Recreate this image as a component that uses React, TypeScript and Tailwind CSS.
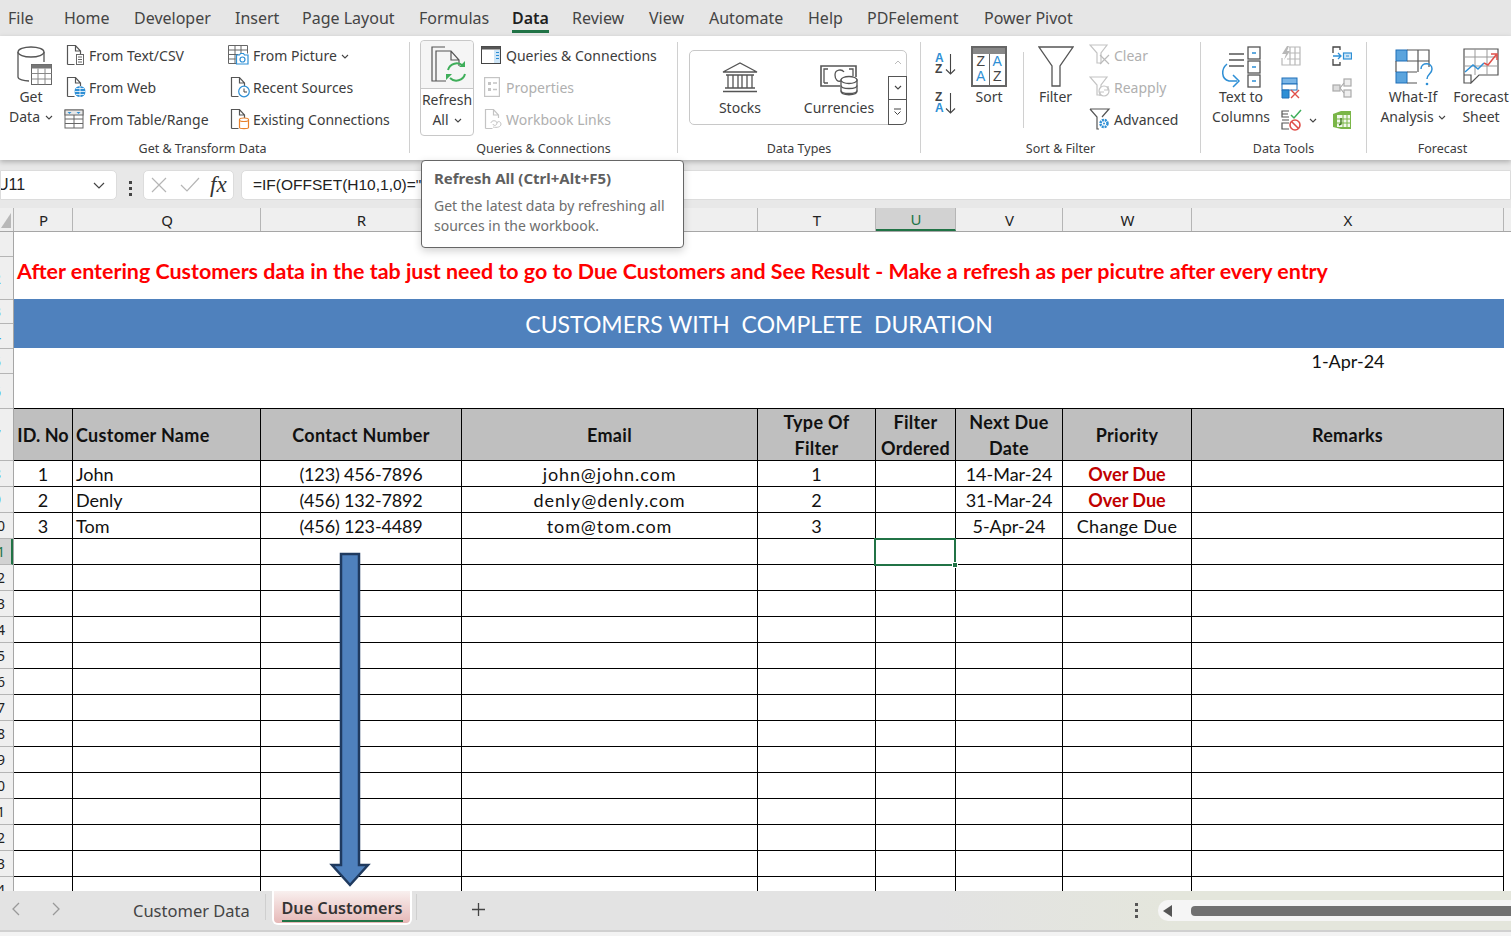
import type { ReactNode } from "react";

const menuItems = [
  { label: "File", cls: "w-[64px] pl-[8px]" },
  { label: "Home", cls: "w-[70px]" },
  { label: "Developer", cls: "w-[101px]" },
  { label: "Insert", cls: "w-[67px]" },
  { label: "Page Layout", cls: "w-[117px]" },
  { label: "Formulas", cls: "w-[93px]" },
  { label: "Data", cls: "w-[60px] font-semibold text-[#1f1f1f]", active: true },
  { label: "Review", cls: "w-[77px]" },
  { label: "View", cls: "w-[60px]" },
  { label: "Automate", cls: "w-[99px]" },
  { label: "Help", cls: "w-[59px]" },
  { label: "PDFelement", cls: "w-[117px]" },
  { label: "Power Pivot", cls: "w-[100px]" },
];

const cols = [
  "w-[59px]",
  "w-[188px]",
  "w-[201px]",
  "w-[296px]",
  "w-[118px]",
  "w-[80px]",
  "w-[107px]",
  "w-[129px]",
  "w-[312px]",
];

const letters = ["P", "Q", "R", "", "T", "U", "V", "W", "X"];

const rowHeads = [
  { n: "1", cls: "h-[25px]" },
  { n: "2", cls: "h-[43px]" },
  { n: "3", cls: "h-[24px]" },
  { n: "4", cls: "h-[25px]" },
  { n: "5", cls: "h-[25px]" },
  { n: "6", cls: "h-[35px]" },
  { n: "7", cls: "h-[52px]" },
  { n: "8", cls: "h-[26px]" },
  { n: "9", cls: "h-[26px]" },
];

const data = [
  ["1", "John", "(123) 456-7896", "john@john.com", "1", "", "14-Mar-24", "Over Due", ""],
  ["2", "Denly", "(456) 132-7892", "denly@denly.com", "2", "", "31-Mar-24", "Over Due", ""],
  ["3", "Tom", "(456) 123-4489", "tom@tom.com", "3", "", "5-Apr-24", "Change Due", ""],
];

const emptyRows = Array.from({ length: 14 }, (_, i) => i + 11);

const Chev = () => (
  <svg width="8" height="5" viewBox="0 0 8 5" className="inline-block" fill="none" stroke="#444" strokeWidth="1.1">
    <path d="M1 1l3 3 3-3" />
  </svg>
);

const Doc = ({ stroke = "#555", children }: { stroke?: string; children?: ReactNode }) => (
  <svg width="20" height="22" viewBox="0 0 20 22" fill="none">
    <path d="M1.5 20.5V1.5h8l5 5.5v3M9.5 1.5V7h5M1.5 20.5h7" stroke={stroke} strokeWidth="1.2" />
    {children}
  </svg>
);

const GetDataIcon = () => (
  <svg width="36" height="40" viewBox="0 0 36 40" fill="none">
    <path d="M1 6v25c0 2.5 6 4 11 4" stroke="#555" strokeWidth="1.3" />
    <path d="M27 6v10" stroke="#555" strokeWidth="1.3" />
    <ellipse cx="14" cy="6" rx="13" ry="5" fill="#fff" stroke="#555" strokeWidth="1.3" />
    <rect x="14.5" y="18.5" width="20" height="20" fill="#fff" stroke="#666" />
    <rect x="14.5" y="18.5" width="20" height="4" fill="#777" />
    <path d="M14.5 27.5h20M14.5 33h20M21 22.5v16M28 22.5v16" stroke="#888" />
  </svg>
);

const TextCsvIcon = () => (
  <Doc>
    <rect x="10.5" y="10.5" width="7" height="10" fill="#fff" stroke="#666" />
    <path d="M12 13h4M12 15.5h4M12 18h4" stroke="#666" />
  </Doc>
);

const WebIcon = () => (
  <Doc>
    <circle cx="14" cy="15.5" r="5.5" fill="#2e8fd5" />
    <path d="M8.5 15.5h11M14 10v11M10 12.5h8M10 18.5h8" stroke="#fff" strokeWidth=".8" />
  </Doc>
);

const TableRangeIcon = () => (
  <svg width="20" height="20" viewBox="0 0 20 20" fill="none">
    <rect x="1" y="1" width="18" height="18" fill="#fff" stroke="#666" />
    <rect x="1" y="1" width="18" height="5" fill="#e8e8e8" stroke="#666" />
    <path d="M3.5 3l2 2 2-2zM12.5 3l2 2 2-2z" fill="#2e8fd5" />
    <path d="M1 10h18M1 14.500h18M10 6v13" stroke="#666" />
  </svg>
);

const PictureIcon = () => (
  <svg width="21" height="20" viewBox="0 0 21 20" fill="none">
    <path d="M8 18.500H.5V.5h19v8M.5 5h19M.5 9.500h10M.5 14h7M7 .5v18M13 .5v8" stroke="#666" />
    <path d="M8.500 10h3l1-1.500h3l1 1.500h3.500v9h-11.500z" fill="#fff" stroke="#2e8fd5" strokeWidth="1.2" />
    <circle cx="14.500" cy="14.500" r="2.500" stroke="#2e8fd5" strokeWidth="1.2" />
  </svg>
);

const RecentIcon = () => (
  <Doc>
    <circle cx="14" cy="15.500" r="5.300" fill="#fff" stroke="#2e8fd5" strokeWidth="1.2" />
    <path d="M14 12.500v3.500h3" stroke="#444" />
  </Doc>
);

const ExistingIcon = () => (
  <Doc>
    <path d="M9.500 11.500c0-2 9-2 9 0v8c0 1.500-9 1.500-9 0z" fill="#fff" stroke="#e8812c" strokeWidth="1.2" />
    <path d="M9.500 12c0 2 9 2 9 0" stroke="#e8812c" strokeWidth="1.2" />
  </Doc>
);

const RefreshIcon = () => (
  <svg width="36" height="38" viewBox="0 0 36 38" fill="none">
    <path d="M5 35H1V1h13M5 35V5h15l8 9v6M20 5v9h8M5 35h10" stroke="#555" strokeWidth="1.2" />
    <path d="M17 24a9 9 0 0 1 15-4M34 28a9 9 0 0 1-15 4" stroke="#3fae5a" strokeWidth="2" />
    <path d="M34 15v6h-6zM15 34v-6h6z" fill="#3fae5a" />
  </svg>
);

const QueriesIcon = () => (
  <svg width="20" height="18" viewBox="0 0 20 18" fill="none">
    <rect x=".5" y=".5" width="19" height="17" fill="#fff" stroke="#444" />
    <rect x=".5" y=".5" width="19" height="3" fill="#555" />
    <rect x="13" y="4" width="6" height="13" fill="#cfe6f7" />
    <path d="M15 6.500h3M15 9.500h3M15 12.500h3" stroke="#2e8fd5" strokeWidth="1.2" />
  </svg>
);

const PropertiesIcon = () => (
  <svg width="16" height="20" viewBox="0 0 16 20" fill="none">
    <rect x=".5" y=".5" width="15" height="19" stroke="#c4c4c4" strokeWidth="1.400" />
    <path d="M4 5h3v3H4zM4 11h3v3H4z" fill="#c4c4c4" />
    <path d="M9 6h4M9 12.500h4" stroke="#c4c4c4" strokeWidth="1.500" />
  </svg>
);

const LinksIcon = () => (
  <Doc stroke="#c4c4c4">
    <path d="M7 15c0-3 6-3 6 0s-4 3-4 1M9 19c4 1 8 0 8-3s-4-3-4-1" stroke="#c4c4c4" />
  </Doc>
);

const StocksIcon = () => (
  <svg width="36" height="31" viewBox="0 0 36 31" fill="none" stroke="#555" strokeWidth="1.300">
    <path d="M1 10L18 1l17 9zM4 13h28M6 13v13M11 13v13M16 13v13M20 13v13M25 13v13M30 13v13M3 26h30M1 29.500h34" />
  </svg>
);

const CurrenciesIcon = () => (
  <svg width="38" height="32" viewBox="0 0 38 32" fill="none" stroke="#555" strokeWidth="1.300">
    <path d="M20 21H1V1h35v11" strokeWidth="1.600" />
    <path d="M4 18V4h4M33 11V4h-4M4 18h4" />
    <path d="M24 7c-2-3-9-3-9 3 0 5 3 7 6 6" />
    <path d="M21 15v11c0 5 16 5 16 0V15z" fill="#fff" />
    <ellipse cx="29" cy="15" rx="8" ry="3.500" fill="#fff" />
    <path d="M21 20.500c0 4 16 4 16 0M21 25.500c0 4 16 4 16 0" />
  </svg>
);

const SortAZ = ({ flip }: { flip?: boolean }) => (
  <div className="flex items-center gap-[1px] h-[24px]">
    <div className="flex flex-col text-[12px] leading-[11px] font-semibold font-['Liberation_Sans',sans-serif]">
      <span className={flip ? "text-[#444]" : "text-[#2e8fd5]"}>{flip ? "Z" : "A"}</span>
      <span className={flip ? "text-[#2e8fd5]" : "text-[#444]"}>{flip ? "A" : "Z"}</span>
    </div>
    <svg width="11" height="22" viewBox="0 0 11 22" fill="none" stroke="#444" strokeWidth="1.100">
      <path d="M5.500 1v20M1 16.500l4.500 4.500 4.500-4.500" />
    </svg>
  </div>
);

const SortIcon = () => (
  <div className="w-[36px] h-[41px] border-2 border-[#666] flex flex-col">
    <div className="h-[6px] bg-[#888]" />
    <div className="flex flex-1 text-[14px] leading-[15px] font-['Liberation_Sans',sans-serif] text-center">
      <div className="flex-1 border-r border-[#666]">
        <div className="text-[#444]">Z</div>
        <div className="text-[#2e8fd5]">A</div>
      </div>
      <div className="flex-1">
        <div className="text-[#2e8fd5]">A</div>
        <div className="text-[#444]">Z</div>
      </div>
    </div>
  </div>
);

const FilterIcon = () => (
  <svg width="36" height="41" viewBox="0 0 36 41" fill="none" stroke="#555" strokeWidth="1.300">
    <path d="M1 1h34L22 20v20h-8V20z" />
  </svg>
);

const ClearIcon = () => (
  <svg width="22" height="22" viewBox="0 0 22 22" fill="none" stroke="#c4c4c4" strokeWidth="1.200">
    <path d="M1 1h17l-6 8v10H8V9z" />
    <path d="M11 11l9 9M20 11l-9 9" stroke="#bbb" />
  </svg>
);

const ReapplyIcon = () => (
  <svg width="22" height="22" viewBox="0 0 22 22" fill="none" stroke="#c4c4c4" strokeWidth="1.200">
    <path d="M1 1h17l-6 8v10H8V9z" />
    <circle cx="15" cy="15" r="5" fill="#fff" />
    <path d="M19 10v4h-4M11 20v-4h4" />
  </svg>
);

const AdvancedIcon = () => (
  <svg width="22" height="22" viewBox="0 0 22 22" fill="none" stroke="#555" strokeWidth="1.200">
    <path d="M1 1h19l-7 8M1 1l7 8v12h2" />
    <circle cx="15" cy="15.500" r="3.500" stroke="#2e8fd5" strokeWidth="2.500" strokeDasharray="2 .8" />
    <circle cx="15" cy="15.500" r="1" fill="#2e8fd5" stroke="none" />
  </svg>
);

const TextColumnsIcon = () => (
  <svg width="40" height="44" viewBox="0 0 40 44" fill="none">
    <path d="M8 8h15M8 14h15M8 20h15" stroke="#555" strokeWidth="1.300" />
    <rect x="27" y="1" width="12" height="12" stroke="#555" strokeWidth="1.300" />
    <rect x="27" y="15" width="12" height="12" stroke="#555" strokeWidth="1.300" />
    <rect x="27" y="29" width="12" height="12" stroke="#555" strokeWidth="1.300" />
    <path d="M31 7h4M31 21h4M31 35h4" stroke="#2e8fd5" strokeWidth="1.500" />
    <path d="M6 18C0 23 0 33 8 35h8M12 29l6 6-6 6" stroke="#2e8fd5" strokeWidth="1.500" />
  </svg>
);

const FlashFillIcon = () => (
  <svg width="20" height="20" viewBox="0 0 20 20" fill="none" stroke="#b8b8b8" strokeWidth="1.200">
    <path d="M8 1h11v18H1v-7M8 7h11M6 13h13M9 1v18M14 1v18" />
    <path d="M6 0L1 8h4l-2 6 6-9H6l2-5z" fill="#b8b8b8" stroke="none" />
  </svg>
);

const DupesIcon = () => (
  <svg width="20" height="22" viewBox="0 0 20 22" fill="none">
    <rect x="1" y="1" width="15" height="6" fill="#7ab6e8" stroke="#1e6fb8" />
    <rect x="1" y="7" width="15" height="6" fill="#fff" stroke="#1e6fb8" />
    <path d="M1 13h7v8H1z" fill="#2e8fd5" stroke="#1e6fb8" />
    <path d="M10 13l8 8M18 13l-8 8" stroke="#e0504a" strokeWidth="1.400" />
  </svg>
);

const ValidationIcon = () => (
  <svg width="21" height="22" viewBox="0 0 21 22" fill="none" stroke="#555" strokeWidth="1.200">
    <path d="M8 2H1v6h7M1 5h6M8 14H1v6h7M1 11h7" />
    <path d="M10 6l3 3 7-8" stroke="#3fae5a" strokeWidth="1.500" />
    <circle cx="14" cy="16" r="5" stroke="#e0504a" strokeWidth="1.600" />
    <path d="M10.500 12.500l7 7" stroke="#e0504a" strokeWidth="1.600" />
  </svg>
);

const ConsolidateIcon = () => (
  <svg width="20" height="20" viewBox="0 0 20 20" fill="none">
    <path d="M8 4V1H1v6M1 13v6h7v-3" stroke="#444" strokeWidth="1.300" />
    <path d="M1 10h8M6 7l3 3-3 3" stroke="#2e8fd5" strokeWidth="1.300" />
    <rect x="11.500" y="7" width="8" height="6" fill="#cfe6f7" stroke="#2e8fd5" strokeWidth="1.200" />
    <path d="M14 10h3" stroke="#2e8fd5" />
  </svg>
);

const RelationsIcon = () => (
  <svg width="20" height="20" viewBox="0 0 20 20" fill="none" stroke="#aaa" strokeWidth="1.200">
    <rect x="1" y="7" width="7" height="6" fill="#ddd" />
    <rect x="12" y="1" width="7" height="7" fill="#eee" />
    <rect x="12" y="12" width="7" height="7" fill="#eee" />
    <path d="M8 10l4-5M8 10l4 5" />
  </svg>
);

const DataModelIcon = () => (
  <svg width="20" height="20" viewBox="0 0 20 20" fill="none">
    <path d="M1 4l8-3h10v18H9l-8-2z" fill="#7ab648" />
    <rect x="5" y="5" width="13" height="12" fill="#fff" opacity=".9" />
    <path d="M5 9h13M5 13h13M11 5v12M15 5v12" stroke="#7ab648" />
    <path d="M9 8v6l-2 1" stroke="#3f7a1d" strokeWidth="1.400" />
  </svg>
);

const WhatIfIcon = () => (
  <svg width="40" height="38" viewBox="0 0 40 38" fill="none">
    <rect x="1" y="1" width="11" height="11" fill="#5ba4dd" stroke="#1e6fb8" />
    <rect x="1" y="23" width="11" height="11" fill="#5ba4dd" stroke="#1e6fb8" />
    <path d="M12 1h22v17M12 12h22M1 12v11M12 23h10M23 1v22M12 34h10" stroke="#555" strokeWidth="1.200" />
    <path d="M26 20c0-7 11-7 11 0 0 5-5 5-5 10" stroke="#2e8fd5" strokeWidth="1.500" />
    <circle cx="32" cy="35" r="1.300" fill="#2e8fd5" />
  </svg>
);

const ForecastIcon = () => (
  <svg width="36" height="36" viewBox="0 0 36 36" fill="none">
    <path d="M8 35H1V1h34v26H16l-8 8v-8H1" stroke="#555" strokeWidth="1.200" />
    <path d="M1 9h34M1 18h34M12 1v26M24 1v26" stroke="#999" />
    <path d="M2 24l8-7 5 4 6-6" stroke="#2e8fd5" strokeWidth="1.500" />
    <path d="M21 15l4 2 8-10M28 6h6v6" stroke="#e0504a" strokeWidth="1.500" />
  </svg>
);

const ListItem = ({
  icon,
  label,
  disabled,
  iconCls = "w-[25px]",
}: {
  icon: ReactNode;
  label: string;
  disabled?: boolean;
  iconCls?: string;
}) => (
  <div className={`flex items-center h-[32px] pb-[2px] whitespace-nowrap ${disabled ? "text-[#b0b0b0]" : "text-[#3c3c3c]"}`}>
    <div className={`${iconCls} shrink-0 flex items-center`}>{icon}</div>
    {label}
  </div>
);

const Group = ({
  cls,
  label,
  labelCls = "",
  children,
}: {
  cls: string;
  label: string;
  labelCls?: string;
  children: ReactNode;
}) => (
  <div className={`${cls} shrink-0 flex flex-col`}>
    <div className="h-[100px] flex">{children}</div>
    <div className={`h-[16px] pt-[3px] flex items-center justify-center text-[12.500px] text-[#3c3c3c] whitespace-nowrap ${labelCls}`}>
      {label}
    </div>
  </div>
);

const Divider = ({ cls = "h-[111px] mt-[2px]" }: { cls?: string }) => (
  <div className={`${cls} w-[1px] bg-[#d0d0d0] shrink-0`} />
);

export default function App() {
  return (
    <div className="relative w-[1511px] h-[936px] overflow-hidden bg-white font-['Noto_Sans',sans-serif] text-[14px]">
      {/* menu tabs */}
      <div className="h-[36px] bg-[#e6e6e6] flex items-center text-[16px] text-[#444]">
        {menuItems.map((m) => (
          <div key={m.label} className={`${m.cls} relative h-[36px] flex items-center shrink-0 whitespace-nowrap`}>
            {m.label}
            {m.active && <div className="absolute left-0 bottom-[3px] w-[37px] h-[3px] bg-[#217346]" />}
          </div>
        ))}
      </div>

      {/* ribbon */}
      <div className="relative z-10 h-[124px] bg-white pt-[4px] flex shadow-[0_2px_5px_rgba(0,0,0,0.25)]">
        <Group cls="w-[409px]" label="Get & Transform Data" labelCls="pr-[4px]">
          <div className="w-[62px] mr-[2px] flex flex-col items-center leading-[20px] text-[#3c3c3c]">
            <div className="h-[47px] pt-[6px] pl-[8px]">
              <GetDataIcon />
            </div>
            <div>Get</div>
            <div className="flex items-center gap-[5px]">
              Data <Chev />
            </div>
          </div>
          <div className="w-[164px]">
            <ListItem icon={<TextCsvIcon />} label="From Text/CSV" iconCls="w-[25px] pl-[2px]" />
            <ListItem icon={<WebIcon />} label="From Web" iconCls="w-[25px] pl-[2px]" />
            <ListItem icon={<TableRangeIcon />} label="From Table/Range" />
          </div>
          <div>
            <div className="flex items-center h-[32px] pb-[2px] whitespace-nowrap text-[#3c3c3c]">
              <div className="w-[25px]">
                <PictureIcon />
              </div>
              From Picture <span className="ml-[4px]"><Chev /></span>
            </div>
            <ListItem icon={<RecentIcon />} label="Recent Sources" iconCls="w-[25px] pl-[2px]" />
            <ListItem icon={<ExistingIcon />} label="Existing Connections" iconCls="w-[25px] pl-[2px]" />
          </div>
        </Group>
        <Divider />
        <Group cls="w-[267px]" label="Queries & Connections">
          <div className="ml-[10px] w-[54px] h-[96px] border border-[#c8c8c8] rounded-[4px] flex flex-col items-center text-[#3c3c3c] leading-[20px]">
            <div className="w-full h-[48px] pl-[3px] bg-[#f5f5f5] border-b border-[#c8c8c8] flex items-center justify-center rounded-t-[4px]">
              <RefreshIcon />
            </div>
            <div className="mt-[1px]">Refresh</div>
            <div className="flex items-center gap-[5px]">
              All <Chev />
            </div>
          </div>
          <div className="ml-[7px]">
            <ListItem icon={<QueriesIcon />} label="Queries & Connections" />
            <ListItem icon={<PropertiesIcon />} label="Properties" iconCls="w-[25px] pl-[3px]" disabled />
            <ListItem icon={<LinksIcon />} label="Workbook Links" iconCls="w-[25px] pl-[3px]" disabled />
          </div>
        </Group>
        <Divider />
        <Group cls="w-[242px]" label="Data Types">
          <div className="ml-[11px] mt-[10px] w-[218px] h-[75px] border border-[#c8c8c8] rounded-[5px] flex text-[#3c3c3c]">
            <div className="w-[198px] flex">
              <div className="w-[100px] flex flex-col items-center pt-[11px]">
                <StocksIcon />
                <div className="mt-[4px]">Stocks</div>
              </div>
              <div className="w-[98px] flex flex-col items-center pt-[14px]">
                <CurrenciesIcon />
                <div>Currencies</div>
              </div>
            </div>
            <div className="flex-1 flex flex-col -mr-[1px] -my-[1px]">
              <div className="h-[26px] flex items-center justify-center">
                <svg width="8" height="5" viewBox="0 0 8 5" fill="none" stroke="#bbb"><path d="M1 4l3-3 3 3" /></svg>
              </div>
              <div className="h-[25px] border border-[#555] flex items-center justify-center">
                <Chev />
              </div>
              <div className="h-[25px] border border-t-0 border-[#555] rounded-br-[5px] flex items-center justify-center">
                <svg width="9" height="8" viewBox="0 0 9 8" fill="none" stroke="#444"><path d="M1 1h7M1.500 3.500l3 3 3-3" /></svg>
              </div>
            </div>
          </div>
        </Group>
        <Divider />
        <Group cls="w-[279px]" label="Sort & Filter">
          <div className="w-[50px] pl-[14px] pt-[12px] flex flex-col gap-[15px]">
            <SortAZ />
            <SortAZ flip />
          </div>
          <div className="w-[36px] mr-[16px] flex flex-col items-center leading-[20px] text-[#3c3c3c]">
            <div className="h-[47px] pt-[6px]">
              <SortIcon />
            </div>
            <div>Sort</div>
          </div>
          <Divider cls="h-[76px] mt-[12px]" />
          <div className="w-[65px] pr-[2px] flex flex-col items-center leading-[20px] text-[#3c3c3c]">
            <div className="h-[47px] pt-[6px]">
              <FilterIcon />
            </div>
            <div>Filter</div>
          </div>
          <div>
            <ListItem icon={<ClearIcon />} label="Clear" disabled />
            <ListItem icon={<ReapplyIcon />} label="Reapply" disabled />
            <ListItem icon={<AdvancedIcon />} label="Advanced" />
          </div>
        </Group>
        <Divider />
        <Group cls="w-[165px]" label="Data Tools">
          <div className="w-[80px] flex flex-col items-center leading-[20px] text-[#3c3c3c]">
            <div className="h-[47px] pt-[6px]">
              <TextColumnsIcon />
            </div>
            <div>Text to</div>
            <div>Columns</div>
          </div>
          <div className="w-[51px]">
            <div className="h-[32px] flex items-center"><FlashFillIcon /></div>
            <div className="h-[32px] flex items-center"><DupesIcon /></div>
            <div className="h-[32px] flex items-center gap-[7px]"><ValidationIcon /><Chev /></div>
          </div>
          <div>
            <div className="h-[32px] flex items-center"><ConsolidateIcon /></div>
            <div className="h-[32px] flex items-center"><RelationsIcon /></div>
            <div className="h-[32px] flex items-center"><DataModelIcon /></div>
          </div>
        </Group>
        <Divider />
        <Group cls="w-[144px]" label="Forecast" labelCls="pl-[7px]">
          <div className="w-[85px] flex flex-col items-center leading-[20px] text-[#3c3c3c] pl-[7px]">
            <div className="h-[47px] pt-[9px] pl-[3px]">
              <WhatIfIcon />
            </div>
            <div>What-If</div>
            <div className="flex items-center gap-[4px] whitespace-nowrap">
              Analysis <Chev />
            </div>
          </div>
          <div className="w-[58px] flex flex-col items-center leading-[20px] text-[#3c3c3c] whitespace-nowrap">
            <div className="h-[47px] pt-[8px]">
              <ForecastIcon />
            </div>
            <div>Forecast</div>
            <div>Sheet</div>
          </div>
        </Group>
      </div>

      {/* formula bar */}
      <div className="h-[48px] bg-[#e8e8e8] pt-[10px] flex font-['Liberation_Sans',sans-serif]">
        <div className="w-[117px] h-[30px] bg-white border border-[#dcdcdc] rounded-r-[5px] flex items-center justify-between pr-[11px] text-[16px] text-[#222] overflow-hidden">
          <span className="-ml-[4px]">U11</span>
          <svg width="12" height="7" viewBox="0 0 12 7" fill="none" stroke="#444" strokeWidth="1.200">
            <path d="M1 1l5 5 5-5" />
          </svg>
        </div>
        <div className="w-[26px] flex flex-col items-center justify-center gap-[3px] pb-[2px]">
          <div className="w-[3px] h-[3px] bg-[#444]" />
          <div className="w-[3px] h-[3px] bg-[#444]" />
          <div className="w-[3px] h-[3px] bg-[#444]" />
        </div>
        <div className="w-[91px] h-[30px] bg-white border border-[#dcdcdc] rounded-[5px] flex items-center pl-[7px] gap-[13px]">
          <svg width="16" height="16" viewBox="0 0 16 16" fill="none" stroke="#b5b5b5" strokeWidth="1.200">
            <path d="M1 1l14 14M15 1L1 15" />
          </svg>
          <svg width="20" height="16" viewBox="0 0 20 16" fill="none" stroke="#b5b5b5" strokeWidth="1.200">
            <path d="M1 8l6 6L19 1" />
          </svg>
          <span className="font-['Liberation_Serif',serif] italic text-[23px] text-[#333] -ml-[3px]">fx</span>
        </div>
        <div className="flex-1 ml-[7px] h-[30px] bg-white border border-[#dcdcdc] rounded-l-[5px] flex items-center pl-[11px] text-[15.500px] text-[#222]">
          =IF(OFFSET(H10,1,0)=""
        </div>
      </div>

      {/* column headers */}
      <div className="flex h-[24px] bg-[#efefef] border-b border-[#a6a6a6] text-[15px] text-[#222]">
        <div className="w-[14px] border-r border-[#b5b5b5] flex items-end justify-end pb-[3px] pr-[2px]">
          <div className="w-0 h-0 border-l-[10px] border-l-transparent border-b-[15px] border-b-[#b8b8b8]" />
        </div>
        {letters.map((l, i) => (
          <div
            key={i}
            className={`${cols[i]} shrink-0 flex items-center justify-center pt-[1px] pl-[1px] border-r border-[#b5b5b5] ${
              l === "U" ? "bg-[#d2d2d2] border-b-2 border-b-[#217346] text-[#217346]" : ""
            }`}
          >
            {l}
          </div>
        ))}
      </div>

      {/* sheet */}
      <div className="relative flex h-[659px] overflow-hidden font-['Lato',sans-serif] text-[#111] text-[18px]">
        <div className="w-[14px] shrink-0 bg-[#efefef] border-r border-[#a6a6a6] overflow-hidden font-['Noto_Sans',sans-serif] text-[14px]">
          {rowHeads.map((r) => (
            <div key={r.n} className={`${r.cls} relative border-b border-[#b5b5b5] text-[#35a3e8] flex items-center`}>
              <span className="absolute -left-[7px]">{r.n}</span>
            </div>
          ))}
          <div className="h-[26px] relative border-b border-[#b5b5b5] flex items-center">
            <span className="absolute -left-[11px] text-[#222]">10</span>
          </div>
          {emptyRows.map((n) => (
            <div
              key={n}
              className={`h-[26px] relative border-b border-[#b5b5b5] flex items-center ${
                n === 11 ? "bg-[#d2d2d2] border-r-2 border-r-[#217346] text-[#217346]" : "text-[#222]"
              }`}
            >
              <span className="absolute -left-[11px]">{n}</span>
            </div>
          ))}
        </div>
        <div className="w-[1490px] shrink-0 flex flex-col">
          <div className="h-[24px] shrink-0" />
          <div className="h-[43px] shrink-0 flex items-center pl-[3px] pb-[13px] text-[21.450px] font-bold text-[#ff0000] whitespace-nowrap">
            After entering Customers data in the tab just need to go to Due Customers and See Result - Make a refresh as per picutre after every entry
          </div>
          <div className="h-[49px] shrink-0 bg-[#4f81bd] pt-[2px] flex items-center justify-center text-[23px] text-white whitespace-pre">
            CUSTOMERS WITH  COMPLETE  DURATION
          </div>
          <div className="h-[25px] shrink-0 flex">
            <div className="w-[1178px]" />
            <div className="w-[312px] text-center">1-Apr-24</div>
          </div>
          <div className="h-[35px] shrink-0" />
          <div className="h-[53px] shrink-0 flex bg-[#bfbfbf] border-y border-black font-bold leading-[26px] tracking-[0.3px]">
            <div className={`${cols[0]} border-r border-black flex items-center justify-center whitespace-nowrap tracking-normal`}>ID. No</div>
            <div className={`${cols[1]} border-r border-black flex items-center pl-[3px]`}>Customer Name</div>
            <div className={`${cols[2]} border-r border-black flex items-center justify-center`}>Contact Number</div>
            <div className={`${cols[3]} border-r border-black flex items-center justify-center`}>Email</div>
            <div className={`${cols[4]} border-r border-black flex items-center justify-center text-center`}>Type Of<br />Filter</div>
            <div className={`${cols[5]} border-r border-black flex items-center justify-center text-center`}>Filter<br />Ordered</div>
            <div className={`${cols[6]} border-r border-black flex items-center justify-center text-center`}>Next Due<br />Date</div>
            <div className={`${cols[7]} border-r border-black flex items-center justify-center`}>Priority</div>
            <div className={`${cols[8]} border-r border-black flex items-center justify-center`}>Remarks</div>
          </div>
          {data.map((row) => (
            <div key={row[0]} className="h-[26px] flex shrink-0 border-b border-black">
              {row.map((c, i) => (
                <div
                  key={i}
                  className={`${cols[i]} shrink-0 pt-[1px] border-r border-black flex items-center ${i === 1 ? "pl-[3px]" : "justify-center"} ${
                    i === 3 ? "tracking-[0.9px]" : ""
                  } ${i === 2 ? "tracking-[-0.15px]" : ""} ${c === "Over Due" ? "font-bold text-[#c00000]" : ""} ${c === "Change Due" ? "tracking-[0.3px]" : ""}`}
                >
                  {c}
                </div>
              ))}
            </div>
          ))}
          {emptyRows.map((n) => (
            <div key={n} className="h-[26px] flex shrink-0 border-b border-black">
              {cols.map((w, i) => (
                <div key={w} className={`${w} shrink-0 border-r border-black relative`}>
                  {n === 11 && i === 5 && (
                    <div className="absolute -left-[2px] -top-[1px] w-[82px] h-[28px] border-2 border-[#217346] z-10">
                      <div className="absolute -right-[4px] -bottom-[4px] w-[6px] h-[6px] bg-[#217346] border border-white" />
                    </div>
                  )}
                </div>
              ))}
            </div>
          ))}
        </div>
        {/* arrow shape drawn over the cells */}
        <svg width="42" height="336" viewBox="0 0 42 336" className="absolute left-[329px] top-[320px] z-20">
          <path d="M12 2h18v311h9L21 333 3 313h9z" fill="#4f81bd" stroke="#1f3a5f" strokeWidth="2.500" />
        </svg>
      </div>

      {/* sheet tabs */}
      <div className="h-[41px] bg-[linear-gradient(90deg,#e3e3e3_62%,#e4e6dc_78%)] border-b-2 border-[#d0d0d0] flex text-[#444]">
        <div className="w-[133px] flex items-center pl-[11px] gap-[32px] pb-[3px]">
          <svg width="9" height="14" viewBox="0 0 9 14" fill="none" stroke="#999" strokeWidth="1.300"><path d="M8 1L2 7l6 6" /></svg>
          <svg width="9" height="14" viewBox="0 0 9 14" fill="none" stroke="#999" strokeWidth="1.300"><path d="M1 1l6 6-6 6" /></svg>
        </div>
        <div className="w-[132px] pt-[2px] flex items-center text-[16.500px] whitespace-nowrap">Customer Data</div>
        <div className="w-[1px] h-[26px] mt-[3px] bg-[#cfcfcf]" />
        <div className="ml-[6px] w-[140px] h-[34px] border-2 border-t-0 border-white rounded-b-[6px] bg-gradient-to-b from-[#f8f0ef] to-[#e6b8b7] flex flex-col items-center font-semibold text-[16.200px] text-[#333]">
          <div className="h-[29px] pt-[5px] flex items-center whitespace-nowrap">Due Customers</div>
          <div className="w-[121px] h-[2px] bg-[#217346]" />
        </div>
        <div className="ml-[4px] w-[1px] h-[26px] mt-[3px] bg-[#cfcfcf]" />
        <div className="w-[122px] flex items-center justify-center pb-[3px] text-[#444]">
          <svg width="15" height="15" viewBox="0 0 15 15" stroke="#444" strokeWidth="1.300"><path d="M7.500 1v13M1 7.500h13" /></svg>
        </div>
        <div className="ml-[575px] w-[44px] flex flex-col items-center justify-center gap-[3px]">
          <div className="w-[3px] h-[3px] bg-[#555]" />
          <div className="w-[3px] h-[3px] bg-[#555]" />
          <div className="w-[3px] h-[3px] bg-[#555]" />
        </div>
        <div className="flex-1 h-[21px] mt-[9px] bg-[#f5f5f5] rounded-l-[10px] flex items-center pl-[5px]">
          <svg width="10" height="12" viewBox="0 0 10 12" fill="#555"><path d="M9 0v12L0 6z" /></svg>
          <div className="ml-[18px] flex-1 h-[10px] bg-[#707070] rounded-l-[4px]" />
        </div>
      </div>
      <div className="h-[4px] bg-[#f3f3f3]" />

      {/* tooltip */}
      <div className="absolute left-[421px] top-[160px] z-30 w-[263px] h-[88px] bg-white border border-[#666] rounded-[4px] shadow-[0_3px_8px_rgba(0,0,0,0.18)] px-[12px] pt-[7px] text-[#6e6e6e] leading-[20px]">
        <div className="font-bold text-[15px] text-[#5f5f5f] mb-[8px] whitespace-nowrap">Refresh All (Ctrl+Alt+F5)</div>
        <div>Get the latest data by refreshing all</div>
        <div>sources in the workbook.</div>
      </div>
    </div>
  );
}
